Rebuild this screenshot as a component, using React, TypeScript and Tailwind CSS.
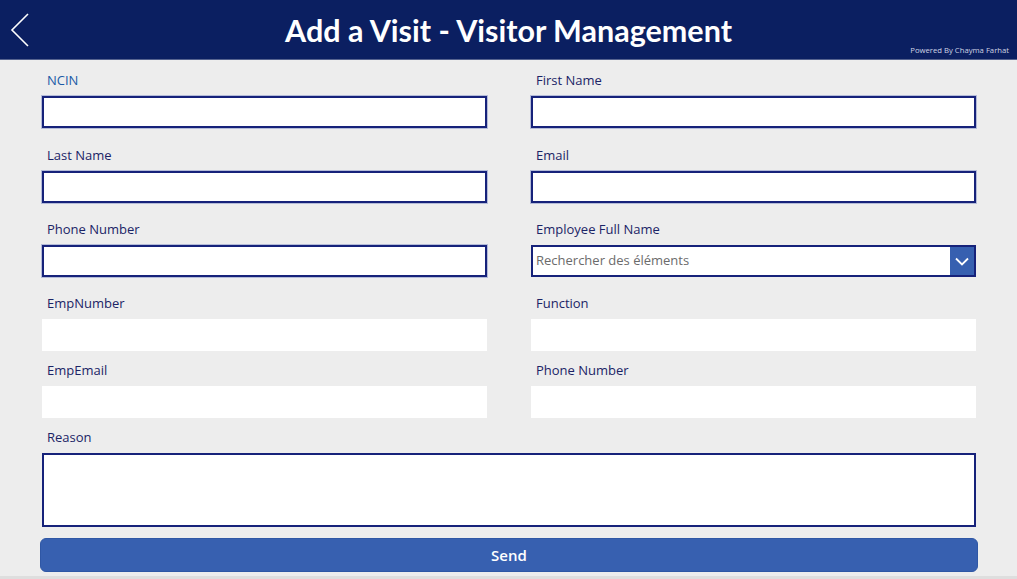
import React from "react";

const labelCls =
  "h-5 leading-5 pl-[5px] text-[13px] text-[#1b2466] mb-[6px] whitespace-nowrap";
const boxedInput =
  "h-8 w-full bg-white border-2 border-[#16227a] outline outline-1 outline-[#b4bbd8]";

function Field({
  label,
  boxed = true,
  labelColor,
}: {
  label: string;
  boxed?: boolean;
  labelColor?: string;
}) {
  return (
    <div className="flex flex-col">
      <div className={labelCls + (labelColor ? " " + labelColor : "")}>{label}</div>
      {boxed ? <div className={boxedInput} /> : <div className="h-8 w-full bg-white" />}
    </div>
  );
}

function ComboField({ label }: { label: string }) {
  return (
    <div className="flex flex-col">
      <div className={labelCls}>{label}</div>
      <div className="h-8 w-full bg-white border-2 border-[#16227a] flex items-stretch">
        <div className="flex-1 pl-[3px] flex items-center text-[13px] text-[#6b6b6b]">
          Rechercher des éléments
        </div>
        <div className="w-[24px] bg-[#3760b0] flex items-center justify-center">
          <svg width="14" height="9" viewBox="0 0 14 9" fill="none">
            <path d="M1 1.5 L7 7.5 L13 1.5" stroke="white" strokeWidth="1.8" />
          </svg>
        </div>
      </div>
    </div>
  );
}

export default function App() {
  return (
    <div
      className="w-[1017px] h-[579px] bg-[#ededed] flex flex-col overflow-hidden"
      style={{ fontFamily: '"Open Sans", "Noto Sans", sans-serif' }}
    >
      {/* Header */}
      <header className="relative h-[60px] shrink-0 bg-[#0b1f61] border-b border-[#56638f] flex items-center justify-center">
        <button className="absolute left-[9px] top-[12px]">
          <svg width="22" height="36" viewBox="0 0 22 36" fill="none">
            <path d="M19 2 L3 18 L19 34" stroke="white" strokeWidth="1.6" />
          </svg>
        </button>
        <h1
          className="text-white font-bold text-[30.5px] leading-none mt-[2px]"
          style={{ fontFamily: "Lato, sans-serif" }}
        >
          Add a Visit - Visitor Management
        </h1>
        <span className="absolute right-[8px] bottom-[4px] text-[7.7px] leading-none text-[#cfd4e4]">
          Powered By Chayma Farhat
        </span>
      </header>

      {/* Form */}
      <main className="flex flex-col pl-[42px] pr-[41px] pt-[10px]">
        <div className="grid grid-cols-2 gap-x-[44px]">
          <Field label="NCIN" labelColor="!text-[#1a5aa6]" />
          <Field label="First Name" />
        </div>
        <div className="grid grid-cols-2 gap-x-[44px] mt-[17px]">
          <Field label="Last Name" />
          <Field label="Email" />
        </div>
        <div className="grid grid-cols-2 gap-x-[44px] mt-[16px]">
          <Field label="Phone Number" />
          <ComboField label="Employee Full Name" />
        </div>
        <div className="grid grid-cols-2 gap-x-[44px] mt-[16px]">
          <Field label="EmpNumber" boxed={false} />
          <Field label="Function" boxed={false} />
        </div>
        <div className="grid grid-cols-2 gap-x-[44px] mt-[9px]">
          <Field label="EmpEmail" boxed={false} />
          <Field label="Phone Number" boxed={false} />
        </div>
        <div className="flex flex-col mt-[9px]">
          <div className={labelCls}>Reason</div>
          <textarea className="h-[74px] w-full bg-white border-2 border-[#16227a] resize-none outline-none" />
        </div>
        <button className="mt-[11px] -mx-[2px] h-[34px] rounded-[6px] bg-[#3760b0] border border-[#2f57a5] text-white text-[15px] font-semibold">
          Send
        </button>
      </main>
      <div className="mt-auto h-[3px] bg-[#dedede]" />
    </div>
  );
}
